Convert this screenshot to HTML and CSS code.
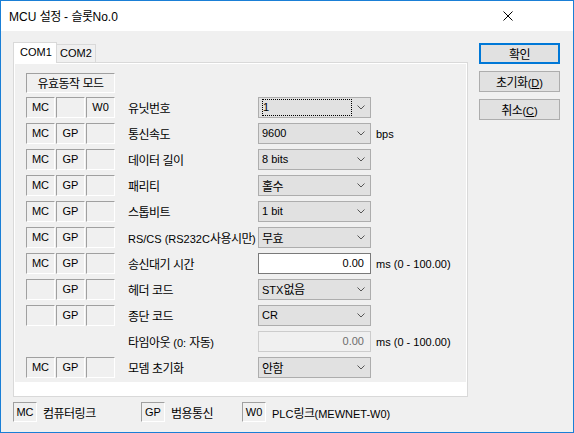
FILE: index.html
```html
<!DOCTYPE html>
<html lang="ko">
<head>
<meta charset="utf-8">
<title>MCU 설정</title>
<link rel="stylesheet" href="styles.css">
</head>
<body>
<div class="window">
  <div class="titlebar">
    <span class="title">MCU <span class="k">설정</span> - <span class="k">슬롯</span>No.0</span>
    <svg class="close" width="10" height="10" viewBox="0 0 10 10"><path d="M0.5 0.5 L9.5 9.5 M9.5 0.5 L0.5 9.5" stroke="#000" stroke-width="1" fill="none"/></svg>
  </div>
  <div class="client">
    <div class="leftcol">
      <div class="tabs">
        <div class="tab active">COM1</div>
        <div class="tab">COM2</div>
      </div>
      <div class="panel">
        <div class="page">
          <div class="mode-head"><span class="k">유효동작 모드</span></div>
          <div class="rows">
            <div class="row">
              <div class="flags"><span class="flag">MC</span><span class="flag"></span><span class="flag">W0</span></div>
              <span class="label"><span class="k">유닛번호</span></span>
              <div class="combo"><span class="focus">1</span><svg class="chev" width="8" height="5" viewBox="0 0 8 5"><path d="M0.5 0.5 L4 4 L7.5 0.5" stroke="#555" fill="none"/></svg></div>
            </div>
            <div class="row">
              <div class="flags"><span class="flag">MC</span><span class="flag">GP</span><span class="flag"></span></div>
              <span class="label"><span class="k">통신속도</span></span>
              <div class="combo"><span class="val">9600</span><svg class="chev" width="8" height="5" viewBox="0 0 8 5"><path d="M0.5 0.5 L4 4 L7.5 0.5" stroke="#555" fill="none"/></svg></div>
              <span class="unit">bps</span>
            </div>
            <div class="row">
              <div class="flags"><span class="flag">MC</span><span class="flag">GP</span><span class="flag"></span></div>
              <span class="label"><span class="k">데이터 길이</span></span>
              <div class="combo"><span class="val">8 bits</span><svg class="chev" width="8" height="5" viewBox="0 0 8 5"><path d="M0.5 0.5 L4 4 L7.5 0.5" stroke="#555" fill="none"/></svg></div>
            </div>
            <div class="row">
              <div class="flags"><span class="flag">MC</span><span class="flag">GP</span><span class="flag"></span></div>
              <span class="label"><span class="k">패리티</span></span>
              <div class="combo"><span class="val k">홀수</span><svg class="chev" width="8" height="5" viewBox="0 0 8 5"><path d="M0.5 0.5 L4 4 L7.5 0.5" stroke="#555" fill="none"/></svg></div>
            </div>
            <div class="row">
              <div class="flags"><span class="flag">MC</span><span class="flag">GP</span><span class="flag"></span></div>
              <span class="label"><span class="k">스톱비트</span></span>
              <div class="combo"><span class="val">1 bit</span><svg class="chev" width="8" height="5" viewBox="0 0 8 5"><path d="M0.5 0.5 L4 4 L7.5 0.5" stroke="#555" fill="none"/></svg></div>
            </div>
            <div class="row">
              <div class="flags"><span class="flag">MC</span><span class="flag">GP</span><span class="flag"></span></div>
              <span class="label">RS/CS (RS232C<span class="k">사용시만</span>)</span>
              <div class="combo"><span class="val k">무효</span><svg class="chev" width="8" height="5" viewBox="0 0 8 5"><path d="M0.5 0.5 L4 4 L7.5 0.5" stroke="#555" fill="none"/></svg></div>
            </div>
            <div class="row">
              <div class="flags"><span class="flag">MC</span><span class="flag">GP</span><span class="flag"></span></div>
              <span class="label"><span class="k">송신대기 시간</span></span>
              <div class="edit">0.00</div>
              <span class="unit">ms (0 - 100.00)</span>
            </div>
            <div class="row">
              <div class="flags"><span class="flag"></span><span class="flag">GP</span><span class="flag"></span></div>
              <span class="label"><span class="k">헤더 코드</span></span>
              <div class="combo"><span class="val">STX<span class="k">없음</span></span><svg class="chev" width="8" height="5" viewBox="0 0 8 5"><path d="M0.5 0.5 L4 4 L7.5 0.5" stroke="#555" fill="none"/></svg></div>
            </div>
            <div class="row">
              <div class="flags"><span class="flag"></span><span class="flag">GP</span><span class="flag"></span></div>
              <span class="label"><span class="k">종단 코드</span></span>
              <div class="combo"><span class="val">CR</span><svg class="chev" width="8" height="5" viewBox="0 0 8 5"><path d="M0.5 0.5 L4 4 L7.5 0.5" stroke="#555" fill="none"/></svg></div>
            </div>
            <div class="row">
              <div class="flags empty"></div>
              <span class="label"><span class="k">타임아웃</span> (0: <span class="k">자동</span>)</span>
              <div class="edit disabled">0.00</div>
              <span class="unit">ms (0 - 100.00)</span>
            </div>
            <div class="row">
              <div class="flags"><span class="flag">MC</span><span class="flag">GP</span><span class="flag"></span></div>
              <span class="label"><span class="k">모뎀 초기화</span></span>
              <div class="combo"><span class="val k">안함</span><svg class="chev" width="8" height="5" viewBox="0 0 8 5"><path d="M0.5 0.5 L4 4 L7.5 0.5" stroke="#555" fill="none"/></svg></div>
            </div>
          </div>
        </div>
      </div>
      <div class="legend">
        <span class="lflag">MC</span><span class="ltext l1"><span class="k">컴퓨터링크</span></span>
        <span class="lflag">GP</span><span class="ltext l2"><span class="k">범용통신</span></span>
        <span class="lflag">W0</span><span class="ltext">PLC<span class="k">링크</span>(MEWNET-W0)</span>
      </div>
    </div>
    <div class="buttons">
      <div class="btn default"><span class="k">확인</span></div>
      <div class="btn"><span class="k">초기화</span>(<u>D</u>)</div>
      <div class="btn"><span class="k">취소</span>(<u>C</u>)</div>
    </div>
  </div>
</div>
</body>
</html>
```

FILE: styles.css
```css
* { box-sizing: border-box; }
html, body { margin: 0; padding: 0; }
body {
  font-family: "Liberation Sans", "Noto Sans CJK KR", sans-serif;
  font-size: 11px;
  color: #000;
  background: #f0f0f0;
}
.k {
  font-family: "Noto Sans CJK KR", sans-serif;
  font-size: 12px;
  letter-spacing: -0.5px;
}
.window {
  width: 574px;
  height: 433px;
  border: 1px solid #1a7fd6;
  background: #f0f0f0;
  overflow: hidden;
}
.titlebar {
  height: 30px;
  background: #fff;
  display: flex;
  align-items: center;
  padding-left: 8px;
  padding-right: 60px;
  justify-content: space-between;
}
.title { font-size: 12px; line-height: 14px; }
.close { display: block; }
.client {
  display: flex;
  padding: 11px 0 0 12px;
}
.leftcol {
  width: 455px;
  display: flex;
  flex-direction: column;
}
.tabs {
  display: flex;
  height: 20px;
  align-items: flex-end;
  position: relative;
  z-index: 1;
}
.tab {
  height: 18px;
  padding: 0 5px;
  border: 1px solid #d9d9d9;
  border-bottom: none;
  background: #f0f0f0;
  line-height: 17px;
}
.tab.active {
  height: 21px;
  margin-bottom: -1px;
  background: #fff;
  width: 44px;
  padding: 0 0 0 6px;
  line-height: 19px;
}
.tab + .tab { border-left: none; width: 39px; padding-left: 3px; }
.panel {
  height: 335px;
  border: 1px solid #d9d9d9;
  background: #fff;
  padding: 1px 1px 0 1px;
}
.page {
  height: 318px;
  background: #f0f0f0;
  padding: 9px 0 0 11px;
}
.mode-head {
  width: 89px;
  height: 20px;
  border: 1px solid #a0a0a0;
  border-right-color: #fff;
  border-bottom-color: #fff;
  text-align: center;
  line-height: 18px;
}
.rows {
  margin-top: 4px;
  display: flex;
  flex-direction: column;
  gap: 5px;
}
.row {
  display: flex;
  align-items: center;
  height: 21px;
}
.flags {
  display: flex;
  gap: 1px;
  width: 89px;
  flex: none;
}
.flag {
  width: 29px;
  height: 21px;
  border: 1px solid #a0a0a0;
  border-right-color: #fff;
  border-bottom-color: #fff;
  text-align: center;
  line-height: 19px;
}
.label {
  width: 130px;
  margin-left: 13px;
  flex: none;
  white-space: nowrap;
}
.combo {
  width: 113px;
  height: 21px;
  border: 1px solid #adadad;
  background: #e1e1e1;
  display: flex;
  align-items: center;
  justify-content: space-between;
  padding: 0 4px 0 3px;
  flex: none;
}
.val { line-height: 19px; }
.focus {
  width: 90px;
  height: 17px;
  border: 1px dotted #000;
  line-height: 15px;
}
.chev { display: block; margin-right: 1px; }
.edit {
  width: 113px;
  height: 21px;
  border: 1px solid #7a7a7a;
  background: #fff;
  text-align: right;
  padding-right: 6px;
  line-height: 19px;
  flex: none;
}
.edit.disabled {
  border-color: #cccccc;
  background: #f0f0f0;
  color: #6d6d6d;
}
.unit { margin-left: 5px; white-space: nowrap; }
.legend {
  display: flex;
  align-items: center;
  margin-top: 5px;
  height: 20px;
}
.lflag {
  width: 24px;
  height: 20px;
  border: 1px solid #a0a0a0;
  border-right-color: #fff;
  border-bottom-color: #fff;
  text-align: center;
  line-height: 18px;
  flex: none;
}
.ltext { margin-left: 6px; white-space: nowrap; }
.l1 { width: 98px; }
.l2 { width: 71px; }
.buttons {
  margin-left: 11px;
  margin-top: 1px;
  display: flex;
  flex-direction: column;
  gap: 7px;
}
.btn {
  width: 81px;
  height: 21px;
  border: 1px solid #adadad;
  background: #e1e1e1;
  text-align: center;
  line-height: 19px;
}
.btn.default {
  border: 2px solid #0078d7;
  line-height: 17px;
}
u { text-decoration: underline; text-underline-offset: 1px; }
```
